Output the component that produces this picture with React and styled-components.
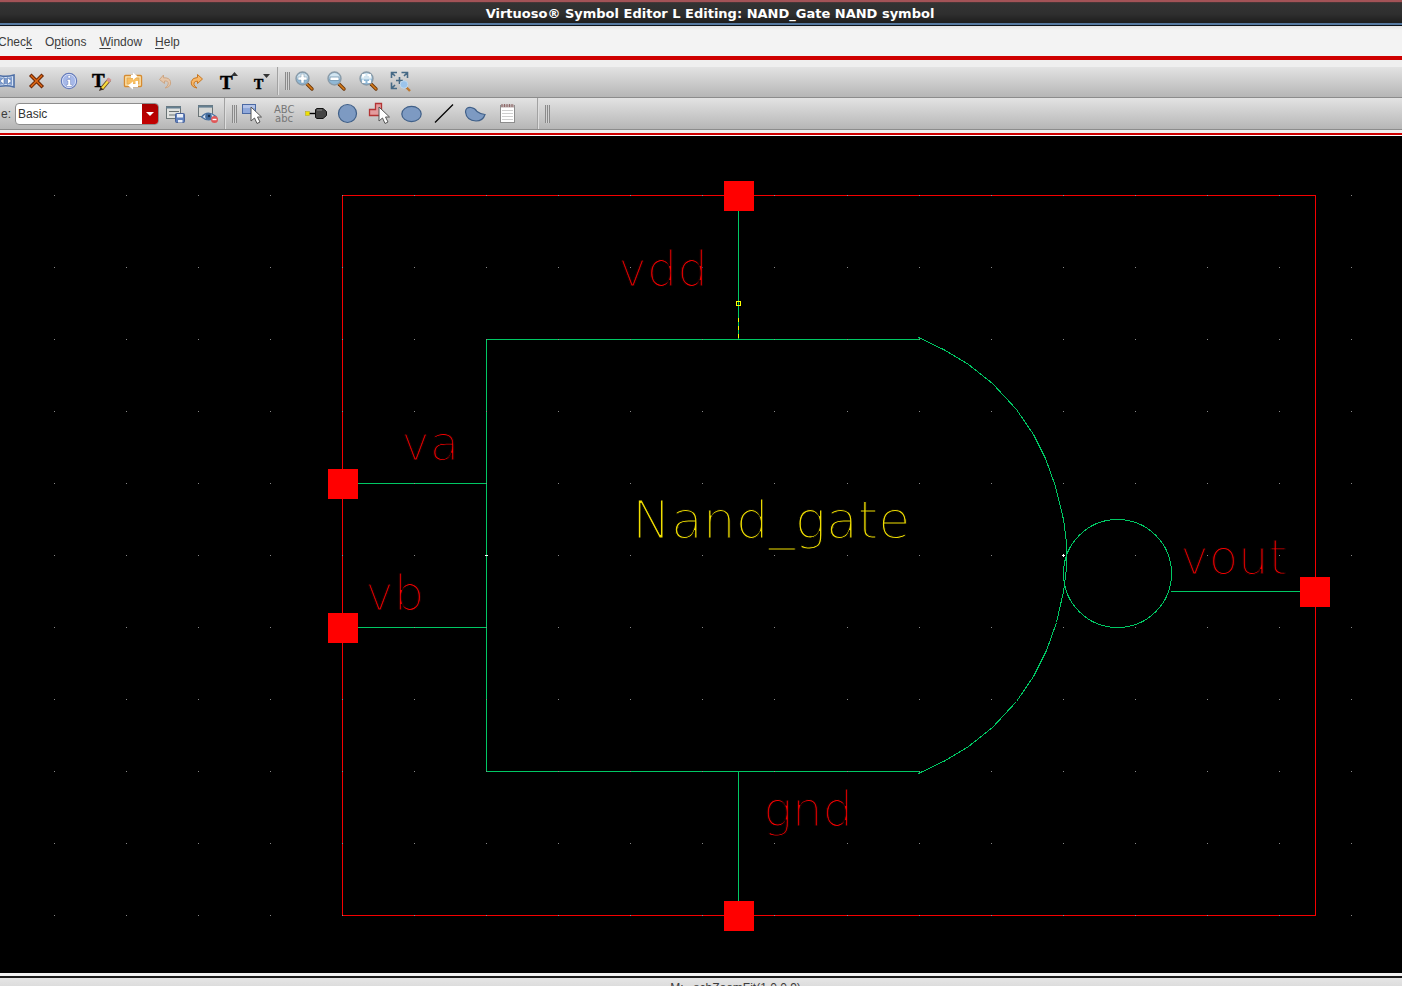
import React from "react";
import styled, { createGlobalStyle } from "styled-components";

const GlobalStyle = createGlobalStyle`
  html, body { margin: 0; background: #000; overflow: hidden; }
  * { box-sizing: border-box; }
`;

const Window = styled.div`
  display: flex;
  flex-direction: column;
  width: 100%;
  overflow: hidden;
  background: #efefef;
  color: #3c3c3c;
  font-family: "Liberation Sans", Arial, sans-serif;
  font-size: 12px;
`;

const TitleBar = styled.header`
  height: 26px;
  padding-left: 18px;
  border-top: 2px solid #a35357;
  border-bottom: 1px solid #0c1218;
  background: linear-gradient(#5a3a3c 0, #333 1px, #2f2f2f 12px, #1d1d1d 21px, #5679a0 21px, #5679a0 23px);
  display: flex;
  align-items: center;
  justify-content: center;
`;

const Title = styled.h1`
  margin: 0;
  color: #fff;
  font: bold 13px/20px "DejaVu Sans", sans-serif;
  white-space: nowrap;
`;

const MenuBar = styled.nav`
  display: flex;
  align-items: center;
  gap: 13px;
  height: 34px;
  margin-left: -2px;
  padding-top: 1px;
  background: linear-gradient(#e4e4e4, #f3f3f3 4px);
  border-bottom: 4px solid #cf0000;
`;

const MenuItem = styled.button`
  padding: 0;
  border: 0;
  background: none;
  color: #3c3c3c;
  font: 12px/16px "Liberation Sans", Arial, sans-serif;

  u { text-underline-offset: 2px; }
`;

const Toolbars = styled.div`
  padding: 7px 0 3px;
  border-bottom: 2px solid #cf0000;
`;

const Toolbar = styled.div`
  display: flex;
  align-items: center;
  height: ${(p) => (p.$tall ? 31 : 32)}px;
  padding-bottom: ${(p) => (p.$tall ? 2 : 0)}px;
  border-bottom: 1px solid #8c8c8c;
  background: linear-gradient(#e3e3e3, #b6b6b6);
`;

const ToolGroup = styled.div`
  display: flex;
  gap: 4px;
  margin-left: ${(p) => p.$offset || 0}px;
  padding-right: ${(p) => p.$end || 0}px;
`;

const ToolButton = styled.button`
  width: 28px;
  height: 26px;
  padding: 0;
  border: 0;
  background: none;
  display: flex;
  align-items: center;
  justify-content: center;

  svg { display: block; overflow: visible; }
`;

const Grip = styled.div`
  display: flex;
  align-items: center;
  align-self: stretch;
  width: 13px;
  margin-left: 2px;
  padding-left: 7px;
  border-left: 1px solid #a2a2a2;
  box-shadow: inset 1px 0 0 #dedede;

  &::before {
    content: "";
    width: 5px;
    height: 18px;
    background: repeating-linear-gradient(90deg, #8a8a8a 0, #8a8a8a 1px, #d2d2d2 1px, #d2d2d2 2px);
  }
`;

const Field = styled.label`
  display: flex;
  align-items: center;
  gap: 4px;
  padding: 0 3px 0 1px;
`;

const Combo = styled.span`
  position: relative;
  display: flex;
  width: 144px;
  height: 22px;
  border: 1px solid #8d8d8d;
  border-radius: 4px;
  background: #fff;
  overflow: hidden;
`;

const Select = styled.select`
  flex: 1;
  appearance: none;
  border: 0;
  padding: 0 18px 0 2px;
  background: transparent;
  color: #333;
  font: 12px/18px "Liberation Sans", Arial, sans-serif;
`;

const ComboArrow = styled.span`
  position: absolute;
  top: 0;
  right: 0;
  bottom: 0;
  width: 16px;
  display: flex;
  align-items: center;
  justify-content: center;
  background: linear-gradient(#a80000, #c40000);
  pointer-events: none;
`;

const Canvas = styled.svg`
  display: block;
  width: 100%;
  height: auto;
  border-top: 1px solid #fff;
  background: #000;
`;

/* The background-coloured outline trims the strokes to plotter-thin lines. */
const Label = styled.text`
  fill: ${(p) => p.$color};
  stroke: #000;
  stroke-width: 1px;
  font-family: "DejaVu Sans", sans-serif;
  font-weight: 200;
  font-size: ${(p) => (p.$large ? 52 : 48)}px;
`;

const StatusBar = styled.footer`
  border-top: 3px solid #f2f2f2;
  height: 34px;
`;

const StatusText = styled.div`
  display: flex;
  justify-content: center;
  padding: 3px 0 0 69px;
  height: 31px;
  border-top: 2px solid #1c1c1c;
  background: linear-gradient(#e6e6e6, #c4c4c4);
  line-height: 14px;
  color: #3c3c3c;
`;

const Icon = ({ children }) => (
  <svg width="24" height="24" viewBox="0 0 24 24" aria-hidden="true">{children}</svg>
);

const Pointer = ({ x, y }) => (
  <path transform={`translate(${x} ${y})`} d="M-1 -1V13L2.500 10L5 15.500L8 14L5.500 9H9.500Z" fill="#fff" stroke="#555" strokeWidth="1" />
);

const Lens = ({ children }) => (
  <>
    <path d="M15 15L20 20" stroke="#6d3608" strokeWidth="3.400" strokeLinecap="round" />
    <path d="M15 15L20 20" stroke="#d87f1c" strokeWidth="1.600" strokeLinecap="round" />
    <circle cx="10.500" cy="9.500" r="6.500" fill="#8fb8d6" stroke="#8a9ba8" strokeWidth="1.400" />
    <path d="M5 9.500A5.500 5.500 0 0 1 16 9.500Q10.500 11.500 5 9.500" fill="#d3e5f0" />
    {children}
  </>
);

const icons = {
  stretch: (
    <Icon>
      <path d="M4 6Q13 8.500 21 6V18Q13 15.500 4 18Z" fill="#d7e3f5" stroke="#4e6fa6" strokeWidth="1.600" />
      <path d="M6 8Q13 10 19 8V16Q13 14 6 16Z" fill="#7e9cce" />
      <path d="M11 8.500V15.500L7 12ZM14.500 8.500V15.500L18.500 12Z" fill="#fff" stroke="#4e6fa6" strokeWidth=".6" />
    </Icon>
  ),
  remove: (
    <Icon>
      <path d="M6.500 7L16.500 17M16.500 7L6.500 17" stroke="#6b2604" strokeWidth="3.600" strokeLinecap="square" />
      <path d="M6.500 7L16.500 17M16.500 7L6.500 17" stroke="#d96514" strokeWidth="1.600" strokeLinecap="square" />
    </Icon>
  ),
  info: (
    <Icon>
      <circle cx="12" cy="12" r="7.600" fill="#a6b8e8" stroke="#647bbb" strokeWidth="1.200" />
      <circle cx="12" cy="12" r="6.600" fill="none" stroke="#d5def6" />
      <path d="M11 6.500H13.500V9H11ZM10 10.500H13.500V15.500H15V17.500H9.500V15.500H11V12H10Z" fill="#fff" stroke="#5f75b4" strokeWidth=".4" />
    </Icon>
  ),
  editText: (
    <Icon>
      <text x="3" y="18" fontFamily="Liberation Serif, serif" fontWeight="bold" fontSize="19" stroke="#000" strokeWidth=".5" fill="#000">T</text>
      <path d="M12.500 20L20.500 10.500" stroke="#6a4a24" strokeWidth="4" />
      <path d="M13 19.500L20 11" stroke="#f8dc3c" strokeWidth="2.200" />
      <path d="M18.800 12.600L21 9.600" stroke="#d5938f" strokeWidth="3.600" />
      <path d="M10 22L11.500 18L14.500 20.500Z" fill="#3d2f22" />
    </Icon>
  ),
  swap: (
    <Icon>
      <rect x="3.500" y="6.500" width="17" height="11" rx="1" fill="#ffe9b4" stroke="#d68a2f" strokeWidth="1.400" />
      <rect x="6" y="9" width="12" height="6" fill="#f8bf62" stroke="#e3aa57" />
      <path d="M12 3.500V6H10V9H12V11L16.500 7.200Z" fill="#fff" />
      <path d="M12 20.500V18H17V12H14.500V15H12V12.500L7 16.500Z" fill="#fff" />
    </Icon>
  ),
  undo: (
    <Icon>
      <path d="M10.500 6L6.500 10.500L11.500 14.500V12Q15.500 11.500 15.200 15Q15 17 12 19Q18.500 18 17.500 12.500Q16.500 8.500 10.500 8.800Z" fill="#e5c6aa" stroke="#cda684" />
    </Icon>
  ),
  redo: (
    <Icon>
      <path d="M12.500 5.500L17.500 10L12.500 14.500V12.200Q8.500 12 9 15.500Q9.500 17.500 12 19Q5.500 18 6.300 12.500Q7.500 8.500 12.500 8.500Z" fill="#f8b768" stroke="#c77722" />
    </Icon>
  ),
  bigger: (
    <Icon>
      <text x="3" y="20" fontFamily="Liberation Serif, serif" fontWeight="bold" fontSize="19" stroke="#000" strokeWidth=".5" fill="#000">T</text>
      <path d="M14 7L17.500 3L21 7Z" fill="#333" />
    </Icon>
  ),
  smaller: (
    <Icon>
      <text x="5" y="20" fontFamily="Liberation Serif, serif" fontWeight="bold" fontSize="14" stroke="#000" strokeWidth=".5" fill="#000">T</text>
      <path d="M14 5H21L17.500 9Z" fill="#333" />
    </Icon>
  ),
  zoomIn: <Icon><Lens><path d="M9 5H12V8H15V11H12V14H9V11H6V8H9Z" fill="#fff" stroke="#7896ab" strokeWidth=".5" /></Lens></Icon>,
  zoomOut: <Icon><Lens><rect x="6" y="8" width="9" height="3.500" fill="#fff" stroke="#5f87a5" strokeWidth=".7" /></Lens></Icon>,
  zoomFit: <Icon><Lens><path d="M7 8.500V6H9.500M11.500 6H14V8.500M14 10.500V13H11.500M9.500 13H7V10.500" stroke="#fff" strokeWidth="1.800" fill="none" /></Lens></Icon>,
  zoomArea: (
    <Icon>
      <path d="M3.500 9V3.500H9M13.500 3.500H19.500V9M9 19.500H3.500V13.500M7 7L4 4M16 7L19 4M7 16L4 19M11.500 8V15M8 11.500H15" stroke="#466985" strokeWidth="1.600" fill="none" />
      <path d="M18 18L22 22" stroke="#bd772f" strokeWidth="2.400" />
      <circle cx="16" cy="15.500" r="3.800" fill="#9bc4ec" stroke="#bdd8f0" />
    </Icon>
  ),
  saveForm: (
    <Icon>
      <rect x="2.500" y="4.500" width="14" height="12" fill="#e0e2e0" stroke="#6a7476" />
      <path d="M2 5.500H17" stroke="#657f91" strokeWidth="2" />
      <path d="M5 9.500H15M5 13H13" stroke="#6b7274" strokeWidth="1.200" />
      <rect x="11.500" y="11.500" width="9" height="9" rx="1" fill="#5f80bd" stroke="#496299" />
      <path d="M13 12H19V15.500H13ZM14 18H18.500V20.500H14Z" fill="#e9eef7" />
    </Icon>
  ),
  hideForm: (
    <Icon>
      <rect x="2.500" y="3.500" width="14" height="11" fill="#d5d7d5" stroke="#6a7476" />
      <path d="M2 4.500H17" stroke="#657f91" strokeWidth="2.200" />
      <path d="M5.500 15Q12 7.500 20 14.500Q13 21 5.500 15Z" fill="#dce7f4" stroke="#49709f" strokeWidth="1.300" />
      <circle cx="12.500" cy="14.500" r="3.300" fill="#426b9d" />
      <circle cx="13" cy="14" r="1.200" fill="#18304d" />
      <circle cx="18.500" cy="17.500" r="3.500" fill="#df5657" />
      <path d="M16.500 17.500H20.500" stroke="#fff" strokeWidth="1.400" />
    </Icon>
  ),
  select: (
    <Icon>
      <rect x="3.500" y="2.500" width="13" height="9" fill="#8fa8da" stroke="#4b69a3" />
      <path d="M4 3H16V6H4Z" fill="#b3c3e8" />
      <Pointer x={13} y={6} />
    </Icon>
  ),
  note: (
    <Icon>
      <text x="3" y="11" fontFamily="DejaVu Sans, sans-serif" fontSize="10" fill="#777">ABC</text>
      <text x="4" y="20" fontFamily="DejaVu Sans, sans-serif" fontSize="10" fill="#777">abc</text>
    </Icon>
  ),
  pin: (
    <Icon>
      <path d="M5 11.500H12" stroke="#000" strokeWidth="1.400" />
      <rect x="2.500" y="9.500" width="4" height="4" fill="#eee000" stroke="#b5ab2d" strokeWidth=".6" />
      <path d="M12.500 7.500L14 6.500H20L23.500 9.500V13.500L20 16.500H14L12.500 15.500Z" fill="#444" stroke="#111" />
      <path d="M14 8H19" stroke="#888" />
    </Icon>
  ),
  circle: <Icon><circle cx="12.500" cy="11.500" r="9" fill="#7d9ac2" stroke="#3f5f88" strokeWidth="1.200" /></Icon>,
  polygon: (
    <Icon>
      <path d="M8.500 1.500H14.500V13.500H2.500V7.500H8.500Z" fill="#e39c9e" stroke="#b33434" strokeWidth="1.300" />
      <Pointer x={13} y={6} />
    </Icon>
  ),
  ellipse: <Icon><ellipse cx="12.500" cy="12" rx="9.700" ry="7.600" fill="#7d9ac2" stroke="#3f5f88" strokeWidth="1.200" /></Icon>,
  line: <Icon><path d="M4 20.500L22 2.500" stroke="#000" strokeWidth="1.200" /></Icon>,
  arc: <Icon><path d="M2.500 10Q2.500 5 8 5.500Q12 6 14 9.500Q18 12.500 22 12.500Q20 19 13 19Q3.500 18.500 2.500 10Z" fill="#7d9ac2" stroke="#3f5f88" strokeWidth="1.200" /></Icon>,
  notepad: (
    <Icon>
      <rect x="5.500" y="3.500" width="14" height="17" fill="#fff" stroke="#8d8d8d" />
      <path d="M6 2.500H19V5.500H6Z" fill="#b9a9a9" />
      <path d="M7 2V5M9.500 2V5M12 2V5M14.500 2V5M17 2V5" stroke="#8f6a6a" />
      <path d="M7 8.500H18M7 11.500H18M7 14.500H18M7 17.500H18" stroke="#cfcfcf" />
    </Icon>
  ),
};

const Tools = ({ items, offset, end }) => (
  <ToolGroup $offset={offset} $end={end}>
    {items.map((name) => (
      <ToolButton key={name} type="button" aria-label={name}>{icons[name]}</ToolButton>
    ))}
  </ToolGroup>
);

const RED = "#f50000";
const GREEN = "#00c864";
const YELLOW = "#d8c800";

const gridColumns = Array.from({ length: 19 }, (_, i) => 54 + 72 * i + (i > 10 ? 1 : 0));
const gridRows = Array.from({ length: 11 }, (_, i) => 195 + 72 * i);

const terminals = [[724, 181], [328, 469], [328, 613], [1300, 577], [724, 901]];

const labels = [
  { text: "vdd", x: 618, y: 286 },
  { text: "va", x: 401, y: 460 },
  { text: "vb", x: 365, y: 610 },
  { text: "vout", x: 1180, y: 574 },
  { text: "gnd", x: 763, y: 826 },
];

const SymbolDrawing = () => (
  <Canvas viewBox="0 136 1402 837" role="img" aria-label="NAND gate symbol">
    <g shapeRendering="crispEdges">
      <g fill="none" stroke={RED}>
        <rect x="342.500" y="195.500" width="973" height="720" />
      </g>
      <g fill="none" stroke={GREEN}>
        <path d="M919 339.500H486.500V771.500H919" />
        <path d="M738.500 211V339M738.500 771V901M358 483.500H486M358 627.500H486M1171 591.500H1300" />
        <path d="M918.500 337.500L945.500 350.500L968.500 364.500L992.500 383.500L1016.500 409.500L1033.500 434.500L1045.500 458.500L1055.500 486.500L1063.500 519.500L1066.500 542.500V568.500L1063.500 591.500L1056.500 622.500L1046.500 650.500L1033.500 676.500L1016.500 701.500L992.500 727.500L968.500 746.500L945.500 760.500L918.500 773.500" />
        <circle cx="1117.500" cy="573.500" r="54" />
      </g>
      <g fill="#888">
        {gridRows.map((y) => gridColumns.map((x) => (
          <rect key={`${x}-${y}`} x={x} y={y} width="1" height="1" />
        )))}
      </g>
      <g fill="#ff0000">
        {terminals.map(([x, y]) => <rect key={`${x}-${y}`} x={x} y={y} width="30" height="30" />)}
      </g>
      <rect x="736.500" y="301.500" width="4" height="4" fill="none" stroke="#ff0" />
      <path d="M738.500 318V338" stroke="#ff0" strokeDasharray="4 4" />
      <path d="M1062 555.500H1065M1063.500 554V557M485 555.500H488" stroke="#fff" />
    </g>
    {labels.map(({ text, x, y }) => <Label key={text} x={x} y={y} $color="#ff0000">{text}</Label>)}
    <Label $large x="632" y="538" $color="#f0de00">Nand_gate</Label>
  </Canvas>
);

export default function App() {
  return (
    <Window>
      <GlobalStyle />
      <TitleBar>
        <Title>Virtuoso® Symbol Editor L Editing: NAND_Gate NAND symbol</Title>
      </TitleBar>
      <MenuBar>
        <MenuItem type="button">Chec<u>k</u></MenuItem>
        <MenuItem type="button">O<u>p</u>tions</MenuItem>
        <MenuItem type="button"><u>W</u>indow</MenuItem>
        <MenuItem type="button"><u>H</u>elp</MenuItem>
      </MenuBar>
      <Toolbars>
        <Toolbar $tall>
          <Tools offset={-9} items={["stretch", "remove", "info", "editText", "swap", "undo", "redo", "bigger", "smaller"]} />
          <Grip />
          <Tools items={["zoomIn", "zoomOut", "zoomFit", "zoomArea"]} />
        </Toolbar>
        <Toolbar>
          <Field>
            e:
            <Combo>
              <Select defaultValue="Basic">
                <option>Basic</option>
              </Select>
              <ComboArrow>
                <svg width="8" height="4" viewBox="0 0 8 4"><path d="M0 0H8L4 4Z" fill="#fff" /></svg>
              </ComboArrow>
            </Combo>
          </Field>
          <Tools items={["saveForm", "hideForm"]} />
          <Grip />
          <Tools end={14} items={["select", "note", "pin", "circle", "polygon", "ellipse", "line", "arc", "notepad"]} />
          <Grip />
        </Toolbar>
      </Toolbars>
      <SymbolDrawing />
      <StatusBar>
        <StatusText>M: _schZoomFit(1.0 0.9)</StatusText>
      </StatusBar>
    </Window>
  );
}
